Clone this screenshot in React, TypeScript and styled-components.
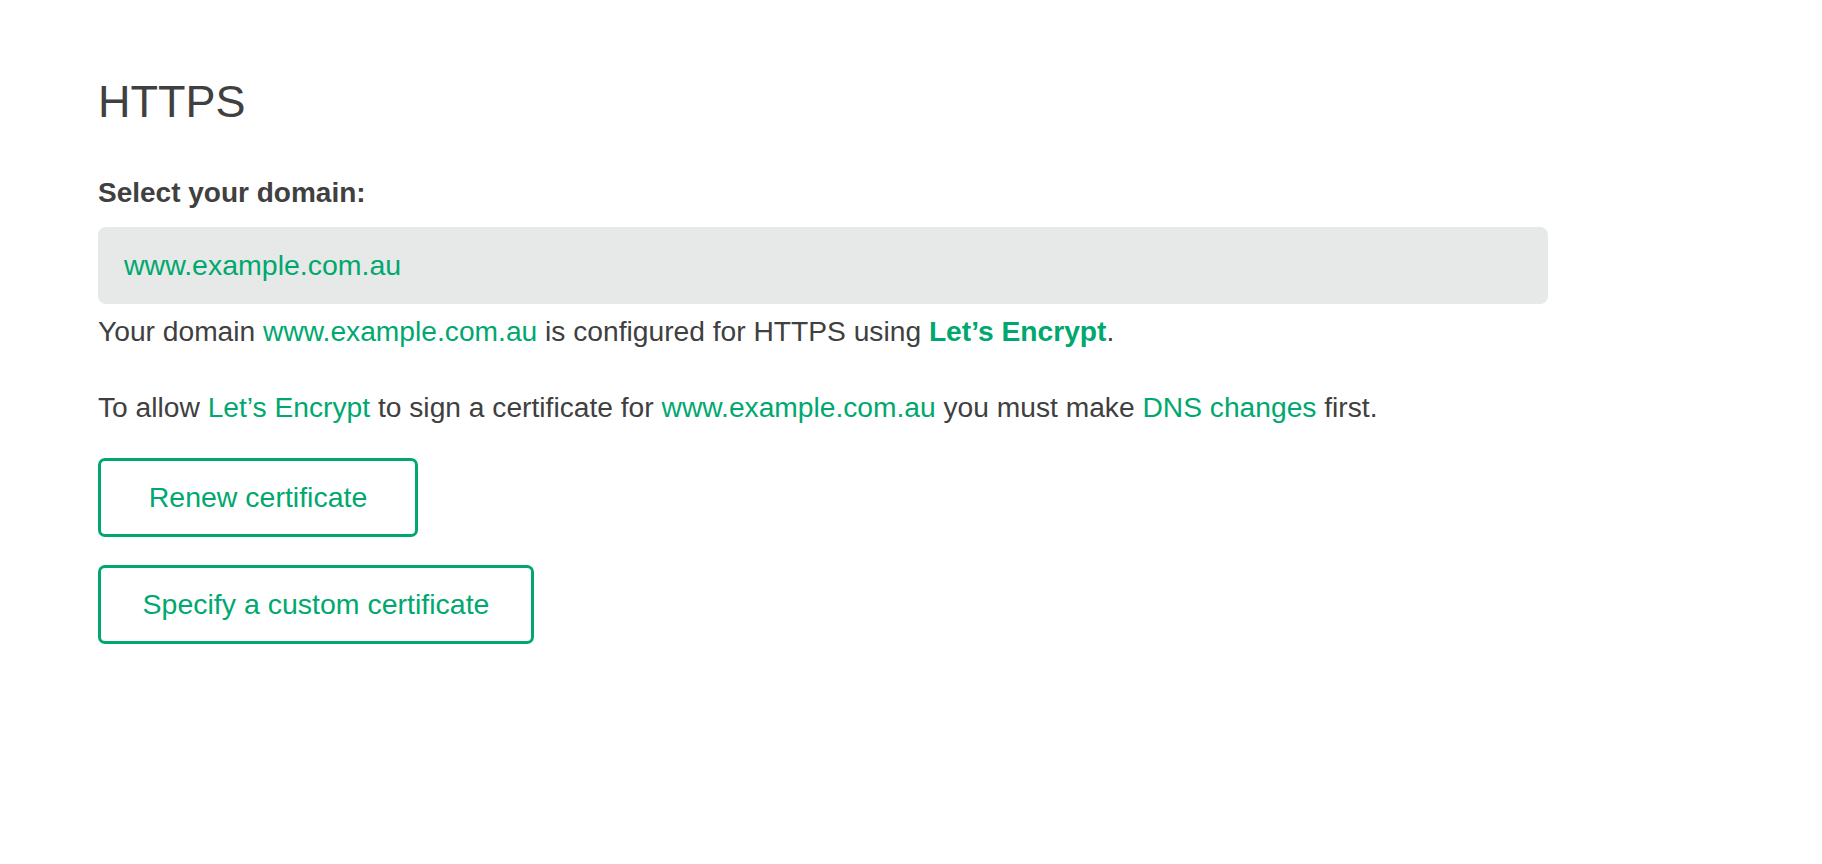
import React from 'react';
import styled, { createGlobalStyle } from 'styled-components';

const GlobalStyle = createGlobalStyle`
  html, body {
    margin: 0;
    padding: 0;
    background: #ffffff;
  }
  body {
    font-family: 'Liberation Sans', Arial, Helvetica, sans-serif;
    color: #404040;
  }
`;

const green = '#00a86f';

const Page = styled.main`
  padding: 75px 98px 0;
  display: flex;
  flex-direction: column;
  align-items: flex-start;
`;

const Title = styled.h1`
  margin: 0;
  font-size: 45px;
  line-height: 54px;
  font-weight: 400;
  color: #404040;
`;

const FieldLabel = styled.label`
  display: block;
  margin-top: 48px;
  font-size: 28px;
  line-height: 32px;
  font-weight: 700;
  color: #404040;
`;

const DomainSelect = styled.div`
  box-sizing: border-box;
  width: 1450px;
  height: 77px;
  margin-top: 18px;
  padding: 0 26px;
  display: flex;
  align-items: center;
  background: #e7e9e8;
  border-radius: 8px;
  font-size: 28.5px;
  color: ${green};
`;

const Paragraph = styled.p<{ $gap: number }>`
  margin: ${({ $gap }) => $gap}px 0 0;
  font-size: 28.2px;
  line-height: 34px;
  color: #404040;
`;

const Link = styled.a<{ $strong?: boolean }>`
  color: ${green};
  text-decoration: none;
  font-weight: ${({ $strong }) => ($strong ? 700 : 400)};
`;

const Actions = styled.div`
  margin-top: 34px;
  display: flex;
  flex-direction: column;
  align-items: flex-start;
  gap: 28px;
`;

const OutlineButton = styled.button<{ $width: number }>`
  box-sizing: border-box;
  width: ${({ $width }) => $width}px;
  height: 79px;
  padding: 0;
  background: #ffffff;
  border: 3px solid ${green};
  border-radius: 7px;
  font-family: 'Liberation Sans', Arial, Helvetica, sans-serif;
  font-size: 28.5px;
  color: ${green};
  cursor: pointer;
`;

export default function App() {
  const domain = 'www.example.com.au';
  return (
    <>
      <GlobalStyle />
      <Page>
        <Title>HTTPS</Title>
        <FieldLabel>Select your domain:</FieldLabel>
        <DomainSelect>{domain}</DomainSelect>
        <Paragraph $gap={10}>
          Your domain <Link href="#">{domain}</Link> is configured for HTTPS using{' '}
          <Link href="#" $strong>
            Let’s Encrypt
          </Link>
          .
        </Paragraph>
        <Paragraph $gap={42}>
          To allow <Link href="#">Let’s Encrypt</Link> to sign a certificate for{' '}
          <Link href="#">{domain}</Link> you must make <Link href="#">DNS changes</Link> first.
        </Paragraph>
        <Actions>
          <OutlineButton $width={320}>Renew certificate</OutlineButton>
          <OutlineButton $width={436}>Specify a custom certificate</OutlineButton>
        </Actions>
      </Page>
    </>
  );
}
